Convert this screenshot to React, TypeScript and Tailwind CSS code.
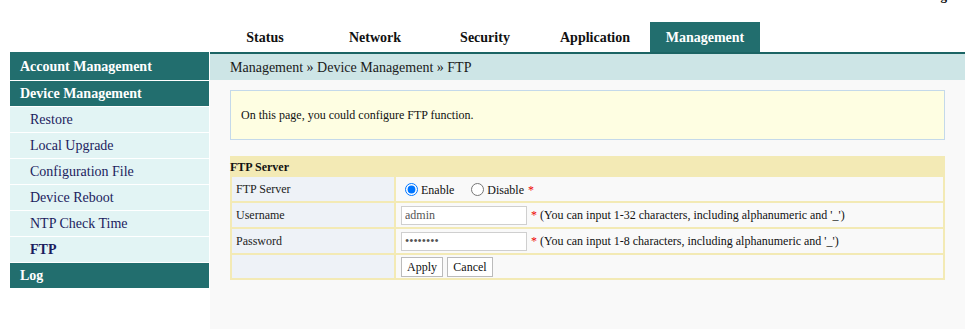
import React from 'react';

const tabs = ['Status', 'Network', 'Security', 'Application', 'Management'];

const menu = [
  { title: 'Account Management', head: true },
  { title: 'Device Management', head: true },
  { title: 'Restore' },
  { title: 'Local Upgrade' },
  { title: 'Configuration File' },
  { title: 'Device Reboot' },
  { title: 'NTP Check Time' },
  { title: 'FTP', active: true },
  { title: 'Log', head: true },
];

export default function App() {
  return (
    <div className="min-h-[329px] w-full bg-white font-['Liberation_Serif',serif] text-[12px] text-[#222]">
      {/* top links */}
      <div className="flex h-[22px] justify-end pr-[1px]">
        <span className="-mt-[12px] text-[13px] font-bold leading-[15px] text-black">Logout</span>
      </div>

      {/* tabs */}
      <div className="flex h-[30px] pl-[210px]">
        {tabs.map((t) => (
          <div
            key={t}
            className={`flex w-[110px] items-center justify-center text-[14px] font-bold ${
              t === 'Management' ? 'bg-[#226e6e] text-white' : 'text-[#111]'
            }`}
          >
            {t}
          </div>
        ))}
      </div>

      <div className="flex pl-[10px]">
        {/* sidebar */}
        <aside className="mr-[1px] w-[199px]">
          {menu.map((m, i) => (
            <div
              key={m.title}
              className={`flex items-center border-b border-white ${i === 0 ? 'h-[29px]' : 'h-[26px]'} ${
                m.head
                  ? 'bg-[#226e6e] pl-[10px] text-[14px] font-bold text-white'
                  : `bg-[#e2f4f4] pl-[20px] text-[14px] text-[#1c1c5e] ${m.active ? 'font-bold' : ''}`
              }`}
            >
              {m.title}
            </div>
          ))}
        </aside>

        {/* main */}
        <main className="mr-[1px] flex-1">
          <div className="h-[2px] bg-[#1b6464]" />
          <div className="flex h-[26px] items-center bg-[#cde5e6] pl-[20px] text-[14px] text-[#1a1a1a]">
            Management » Device Management » FTP
          </div>

          <div className="min-h-[249px] bg-[#f9f9f9] px-[20px] pt-[10px]">
            <div className="flex h-[50px] items-center border border-[#c4d9ea] bg-[#fefee2] pl-[10px] text-[12px] text-[#111]">
              On this page, you could configure FTP function.
            </div>

            <div className="mt-[16px] bg-[#f3eab5]">
              <div className="flex h-[21px] items-center font-bold text-[#111]">FTP Server</div>
              <div className="grid grid-cols-[162px_1fr] gap-[2px] px-[2px] pb-[2px]">
                <div className="flex h-[24px] items-center bg-[#eef2f7] pl-[4px]">FTP Server</div>
                <div className="flex h-[24px] items-center bg-[#f9f9f9] pl-[5px]">
                  <label className="flex items-center">
                    <input type="radio" name="ftp" defaultChecked className="mr-[3px] ml-[4px] h-[13px] w-[13px]" />
                    <span className="mt-[1px] text-[#111]">Enable</span>
                  </label>
                  <label className="ml-[17px] flex items-center">
                    <input type="radio" name="ftp" className="mr-[3px] h-[13px] w-[13px]" />
                    <span className="mt-[1px] text-[#111]">Disable</span>
                  </label>
                  <span className="mt-[1px] ml-[4px] text-[#e00]">*</span>
                </div>

                <div className="flex h-[24px] items-center bg-[#eef2f7] pl-[4px]">Username</div>
                <div className="flex h-[24px] items-center bg-[#f9f9f9] pl-[5px]">
                  <input
                    type="text"
                    defaultValue="admin"
                    className="h-[19px] w-[126px] border border-[#cfcfcf] bg-white pl-[3px] text-[12px] text-[#555] outline-none"
                  />
                  <span className="ml-[4px] text-[#e00]">*</span>
                  <span className="ml-[3px] text-[#111]">(You can input 1-32 characters, including alphanumeric and '_')</span>
                </div>

                <div className="flex h-[24px] items-center bg-[#eef2f7] pl-[4px]">Password</div>
                <div className="flex h-[24px] items-center bg-[#f9f9f9] pl-[5px]">
                  <input
                    type="password"
                    defaultValue="admin123"
                    className="h-[19px] w-[126px] border border-[#cfcfcf] bg-white pl-[3px] text-[12px] text-[#555] outline-none"
                  />
                  <span className="ml-[4px] text-[#e00]">*</span>
                  <span className="ml-[3px] text-[#111]">(You can input 1-8 characters, including alphanumeric and '_')</span>
                </div>

                <div className="h-[23px] bg-[#eef2f7]" />
                <div className="flex h-[23px] items-center gap-[4px] bg-[#f9f9f9] pl-[5px]">
                  <button className="h-[20px] w-[42px] border border-[#bbb] bg-white text-[12px] text-[#111]">Apply</button>
                  <button className="h-[20px] w-[46px] border border-[#bbb] bg-white text-[12px] text-[#111]">Cancel</button>
                </div>
              </div>
            </div>
          </div>
        </main>
      </div>
    </div>
  );
}
